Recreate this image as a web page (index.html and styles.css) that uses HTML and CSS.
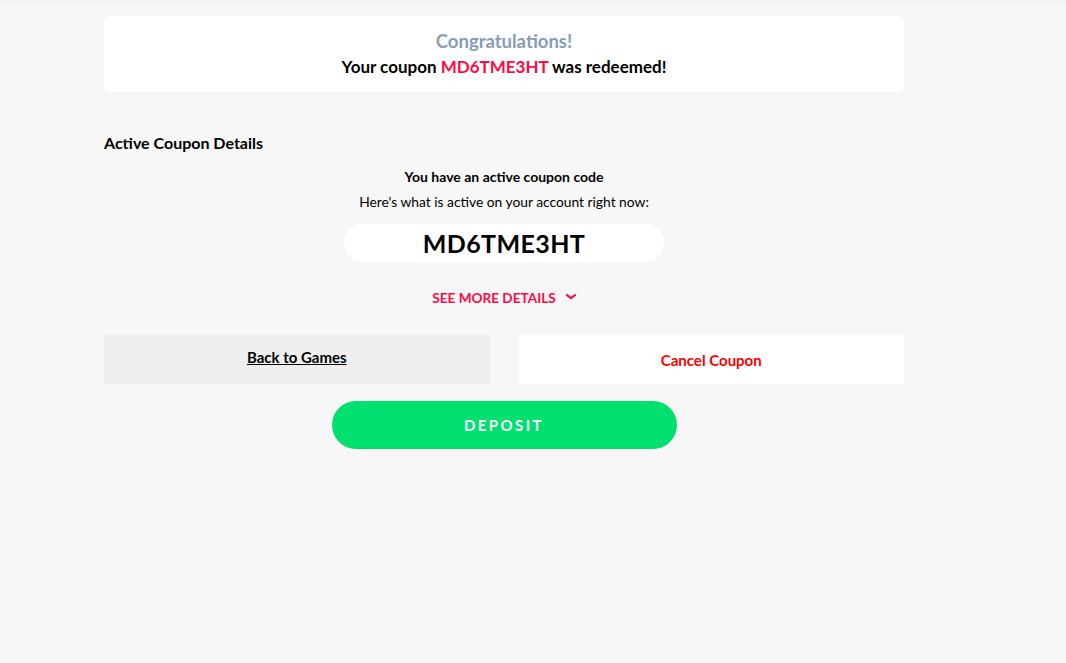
FILE: index.html
```html
<!DOCTYPE html>
<html>
<head>
<meta charset="utf-8">
<link rel="stylesheet" href="styles.css">
</head>
<body>
<div class="topbar"></div>
<main class="wrap">
  <section class="notice">
    <div class="congrats">Congratulations!</div>
    <div class="redeemed">Your coupon <span class="code-red">MD6TME3HT</span> was redeemed!</div>
  </section>

  <h2 class="section-title">Active Coupon Details</h2>

  <section class="active">
    <div class="active-title">You have an active coupon code</div>
    <div class="active-sub">Here's what is active on your account right now:</div>
    <div class="code-pill">MD6TME3HT</div>
    <a class="more" href="#">SEE MORE DETAILS
      <svg class="chev" width="10" height="6" viewBox="0 0 10 6"><path d="M1 1.2 L5 4.2 L9 1.2" fill="none" stroke="#ff0a45" stroke-width="2.2" stroke-linecap="round" stroke-linejoin="round"/></svg>
    </a>
  </section>

  <div class="actions">
    <a class="btn btn-back" href="#">Back to Games</a>
    <a class="btn btn-cancel" href="#">Cancel Coupon</a>
  </div>

  <div class="deposit-row">
    <a class="deposit" href="#">DEPOSIT</a>
  </div>
</main>
</body>
</html>
```

FILE: styles.css
```css
html, body {
  margin: 0;
  padding: 0;
}
body {
  background: #f7f7f7;
  font-family: Lato, "Liberation Sans", sans-serif;
  color: #000;
  min-height: 663px;
}
.topbar {
  height: 3px;
  background: #f1f1f1;
}
.wrap {
  width: 800px;
  margin-left: 104px;
  padding-top: 13px;
}
.notice {
  background: #fff;
  border-radius: 6px;
  height: 76px;
  box-sizing: border-box;
  padding-top: 13px;
  text-align: center;
}
.congrats {
  color: #8a9cb4;
  font-weight: 700;
  font-size: 18.5px;
  line-height: 24px;
}
.redeemed {
  font-weight: 700;
  font-size: 17px;
  line-height: 24px;
  margin-top: 2px;
}
.code-red {
  color: #ff0a45;
}
.section-title {
  font-size: 16px;
  font-weight: 700;
  line-height: 20px;
  margin: 41px 0 0;
}
.active {
  display: flex;
  flex-direction: column;
  align-items: center;
  margin-top: 15px;
}
.active-title {
  font-weight: 700;
  font-size: 14px;
  line-height: 18px;
}
.active-sub {
  font-size: 13.8px;
  line-height: 18px;
  margin-top: 7px;
}
.code-pill {
  margin-top: 13px;
  width: 320px;
  height: 38px;
  border-radius: 19px;
  background: #fff;
  display: flex;
  align-items: center;
  justify-content: center;
  font-weight: 700;
  font-size: 25px;
  letter-spacing: 0.4px;
}
.more {
  margin-top: 27px;
  color: #ff0a45;
  font-weight: 700;
  font-size: 13.6px;
  line-height: 18px;
  text-decoration: none;
  display: flex;
  align-items: center;
  gap: 10px;
  margin-left: 0;
}
.chev {
  margin-top: -2px;
}
.actions {
  display: flex;
  gap: 29px;
  margin-top: 28px;
}
.btn {
  flex: 1;
  height: 49px;
  display: flex;
  align-items: center;
  justify-content: center;
  font-weight: 700;
  font-size: 15px;
}
.btn-back {
  background: #efefef;
  color: #000;
  text-decoration: underline;
  padding-bottom: 5px;
  box-sizing: border-box;
}
.btn-cancel {
  background: #fff;
  color: #ff0000;
  text-decoration: none;
  padding-top: 1px;
  box-sizing: border-box;
}
.deposit-row {
  display: flex;
  justify-content: center;
  margin-top: 17px;
}
.deposit {
  width: 345px;
  height: 48px;
  border-radius: 24px;
  background: #00e06e;
  color: #fff;
  font-weight: 700;
  font-size: 15px;
  letter-spacing: 2.4px;
  text-decoration: none;
  display: flex;
  align-items: center;
  justify-content: center;
}
```
